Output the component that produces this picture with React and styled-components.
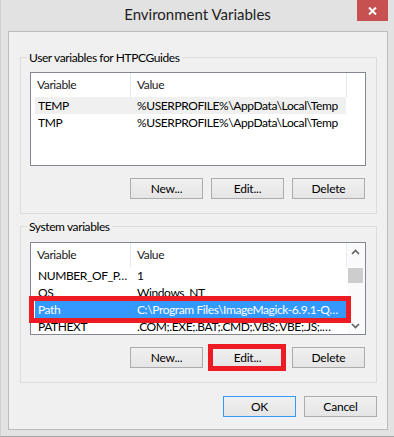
import React from 'react';
import styled, { createGlobalStyle, css } from 'styled-components';

const FONT = 'Lato, "Noto Sans", sans-serif';

const Global = createGlobalStyle`
  html, body { margin: 0; padding: 0; background: #e2e2e2; }
  body { font-family: ${FONT}; }
  * { box-sizing: border-box; }
`;

const Window = styled.div`
  width: 394px;
  height: 437px;
  background: #e2e2e2;
  border-bottom: 1px solid #a3a3a3;
  border-left: 1px solid #cfcfcf;
  display: flex;
  flex-direction: column;
  font-family: ${FONT};
  font-size: 12px;
  letter-spacing: -0.4px;
  color: #000;
`;

const TitleBar = styled.div`
  height: 31px;
  flex: none;
  display: grid;
  grid-template-columns: 1fr auto 1fr;
  align-items: start;
`;

const Title = styled.div`
  grid-column: 2;
  font-size: 15px;
  letter-spacing: 0;
  line-height: 29px;
  color: #1e1e1e;
  white-space: nowrap;
`;

const CloseButton = styled.div`
  grid-column: 3;
  justify-self: end;
  margin-right: 6px;
  width: 31px;
  height: 21px;
  background: #c75050;
  display: flex;
  align-items: center;
  justify-content: center;
`;

const Client = styled.div`
  margin: 0 6px 0 7px;
  height: 399px;
  flex: none;
  border: 1px solid #bcbcbc;
  background: #f0f0f0;
  display: flex;
  flex-direction: column;
  padding: 0 10px 0 11px;
`;

const Group = styled.fieldset`
  margin: ${p => p.$mt}px 0 0 0;
  padding: 0;
  min-width: 0;
  border: 1px solid #dcdcdc;
`;

const Legend = styled.legend`
  margin-left: 6px;
  padding: 0 2px;
  font-size: 12px;
  line-height: 15px;
  color: #000;
`;

const GroupBody = styled.div`
  padding: ${p => p.$pt}px 10px 14px 9px;
  display: flex;
  flex-direction: column;
`;

const ListBox = styled.div`
  height: ${p => p.$h}px;
  border: 1px solid #828790;
  background: #fff;
  display: flex;
  overflow-x: visible;
  overflow-y: clip;
`;

const ListMain = styled.div`
  flex: 1;
  min-width: 0;
  display: flex;
  flex-direction: column;
`;

const Header = styled.div`
  height: 24px;
  flex: none;
  display: grid;
  grid-template-columns: 100px 216px;
`;

const HeaderCell = styled.div`
  border-right: 1px solid #e2e8ef;
  padding-left: 6px;
  line-height: 24px;
  color: #1a1a1a;
  white-space: nowrap;
`;

const Row = styled.div`
  position: relative;
  flex: none;
  margin-left: 4px;
  width: 311px;
  height: 17px;
  display: grid;
  grid-template-columns: 93px 1fr;
  padding-left: 3px;
  line-height: 17px;
  color: #000;
  ${p => p.$hover && css`background: #f0f0f0;`}
  ${p => p.$selected && css`background: #3399ff; color: #fff;`}
  ${p => p.$marked && css`
    &::after {
      content: '';
      position: absolute;
      left: -6px; right: -5px; top: -5px; bottom: -5px;
      border: 5px solid #ed1c24;
    }
  `}
`;

const Cell = styled.div`
  white-space: nowrap;
  overflow: hidden;
  & + & { padding-left: 6px; }
`;

const Scrollbar = styled.div`
  width: 17px;
  flex: none;
  background: #fafafa;
  display: flex;
  flex-direction: column;
`;

const ScrollArrow = styled.div`
  height: 17px;
  flex: none;
  display: flex;
  align-items: center;
  justify-content: center;
  padding-right: 2px;
`;

const Track = styled.div`
  flex: 1;
  padding-top: 8px;
`;

const Thumb = styled.div`
  width: 15px;
  height: 15px;
  background: #cdcdcd;
`;

const ButtonRow = styled.div`
  display: flex;
  justify-content: flex-end;
  gap: 8px;
  margin-top: ${p => p.$mt}px;
  margin-right: ${p => p.$mr || 0}px;
`;

const Button = styled.button`
  position: relative;
  width: 73px;
  height: 21px;
  padding: 0;
  margin: 0;
  border: 1px solid ${p => (p.$default ? '#3399ff' : '#acacac')};
  background: linear-gradient(#f0f0f0, #e5e5e5);
  font-family: ${FONT};
  font-size: 12px;
  letter-spacing: -0.2px;
  color: #000;
  line-height: 19px;
  ${p => p.$marked && css`
    &::after {
      content: '';
      position: absolute;
      left: -4px; right: -3px; top: -4px; bottom: -4px;
      border: 5px solid #ed1c24;
    }
  `}
`;

const Chevron = ({ down }) => (
  <svg width="9" height="6" viewBox="0 0 9 6">
    <polyline
      points={down ? '1,1 4.5,4.5 8,1' : '1,5 4.5,1.5 8,5'}
      fill="none"
      stroke="#606060"
      strokeWidth="1.6"
    />
  </svg>
);

const userVars = [
  { name: 'TEMP', value: '%USERPROFILE%\\AppData\\Local\\Temp', hover: true },
  { name: 'TMP', value: '%USERPROFILE%\\AppData\\Local\\Temp' },
];

const sysVars = [
  { name: 'NUMBER_OF_P…', value: '1' },
  { name: 'OS', value: 'Windows_NT' },
  { name: 'Path', value: 'C:\\Program Files\\ImageMagick-6.9.1-Q…', selected: true, marked: true },
  { name: 'PATHEXT', value: '.COM;.EXE;.BAT;.CMD;.VBS;.VBE;.JS;.…' },
];

const VarList = ({ rows, height, scroll }) => (
  <ListBox $h={height}>
    <ListMain>
      <Header>
        <HeaderCell>Variable</HeaderCell>
        <HeaderCell>Value</HeaderCell>
      </Header>
      {rows.map(r => (
        <Row key={r.name} $hover={r.hover} $selected={r.selected} $marked={r.marked}>
          <Cell>{r.name}</Cell>
          <Cell>{r.value}</Cell>
        </Row>
      ))}
    </ListMain>
    {scroll && (
      <Scrollbar>
        <ScrollArrow><Chevron /></ScrollArrow>
        <Track><Thumb /></Track>
        <ScrollArrow><Chevron down /></ScrollArrow>
      </Scrollbar>
    )}
  </ListBox>
);

export default function App() {
  return (
    <>
      <Global />
      <Window>
        <TitleBar>
          <Title>Environment Variables</Title>
          <CloseButton>
            <svg width="9" height="8" viewBox="0 0 9 8">
              <path d="M1 0.5 L8 7.5 M8 0.5 L1 7.5" stroke="#fff" strokeWidth="2" fill="none" />
            </svg>
          </CloseButton>
        </TitleBar>
        <Client>
          <Group $mt={18}>
            <Legend>User variables for HTPCGuides</Legend>
            <GroupBody $pt={7}>
              <VarList rows={userVars} height={94} />
              <ButtonRow $mt={12} $mr={1}>
                <Button>New...</Button>
                <Button>Edit...</Button>
                <Button>Delete</Button>
              </ButtonRow>
            </GroupBody>
          </Group>
          <Group $mt={5}>
            <Legend>System variables</Legend>
            <GroupBody $pt={8}>
              <VarList rows={sysVars} height={93} scroll />
              <ButtonRow $mt={12} $mr={1}>
                <Button>New...</Button>
                <Button $marked>Edit...</Button>
                <Button>Delete</Button>
              </ButtonRow>
            </GroupBody>
          </Group>
          <ButtonRow $mt={13}>
            <Button $default>OK</Button>
            <Button>Cancel</Button>
          </ButtonRow>
        </Client>
      </Window>
    </>
  );
}
